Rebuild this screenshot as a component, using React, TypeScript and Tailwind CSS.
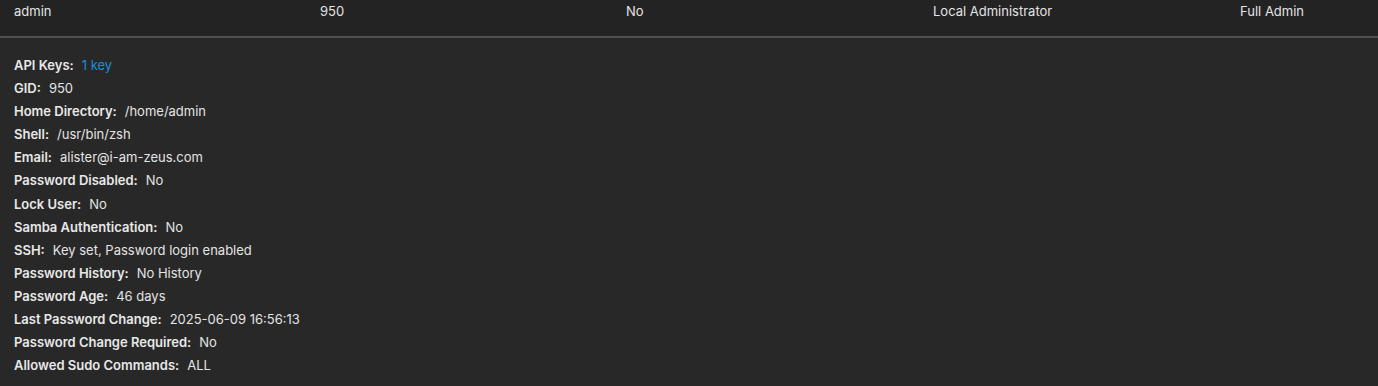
const columns = ["admin", "950", "No", "Local Administrator", "Full Admin"];

const details: { label: string; value: string; link?: boolean }[] = [
  { label: "API Keys:", value: "1 key", link: true },
  { label: "GID:", value: "950" },
  { label: "Home Directory:", value: "/home/admin" },
  { label: "Shell:", value: "/usr/bin/zsh" },
  { label: "Email:", value: "alister@i-am-zeus.com" },
  { label: "Password Disabled:", value: "No" },
  { label: "Lock User:", value: "No" },
  { label: "Samba Authentication:", value: "No" },
  { label: "SSH:", value: "Key set, Password login enabled" },
  { label: "Password History:", value: "No History" },
  { label: "Password Age:", value: "46 days" },
  { label: "Last Password Change:", value: "2025-06-09 16:56:13" },
  { label: "Password Change Required:", value: "No" },
  { label: "Allowed Sudo Commands:", value: "ALL" },
];

export default function App() {
  return (
    <div
      className="w-[1378px] h-[386px] overflow-hidden bg-[#282828] text-[#e4e4e4] text-[13px]"
      style={{ fontFamily: "Inter, 'Noto Sans', sans-serif" }}
    >
      <div className="h-[36px] bg-[#232323] grid grid-cols-[306px_306px_307px_307px_1fr] pl-[14px] pt-[3px] leading-[16px]">
        {columns.map((c, i) => (
          <div key={i}>{c}</div>
        ))}
      </div>
      <div className="h-[2px] bg-[#505050]" />
      <div className="pl-[14px] pt-[16px] flex flex-col">
        {details.map((d) => (
          <div key={d.label} className="leading-[23.1px] flex gap-[8px]">
            <span className="font-semibold text-[#e8e8e8]">{d.label}</span>
            <span className={d.link ? "text-[#1b8fd8]" : "text-[#e4e4e4]"}>{d.value}</span>
          </div>
        ))}
      </div>
    </div>
  );
}
